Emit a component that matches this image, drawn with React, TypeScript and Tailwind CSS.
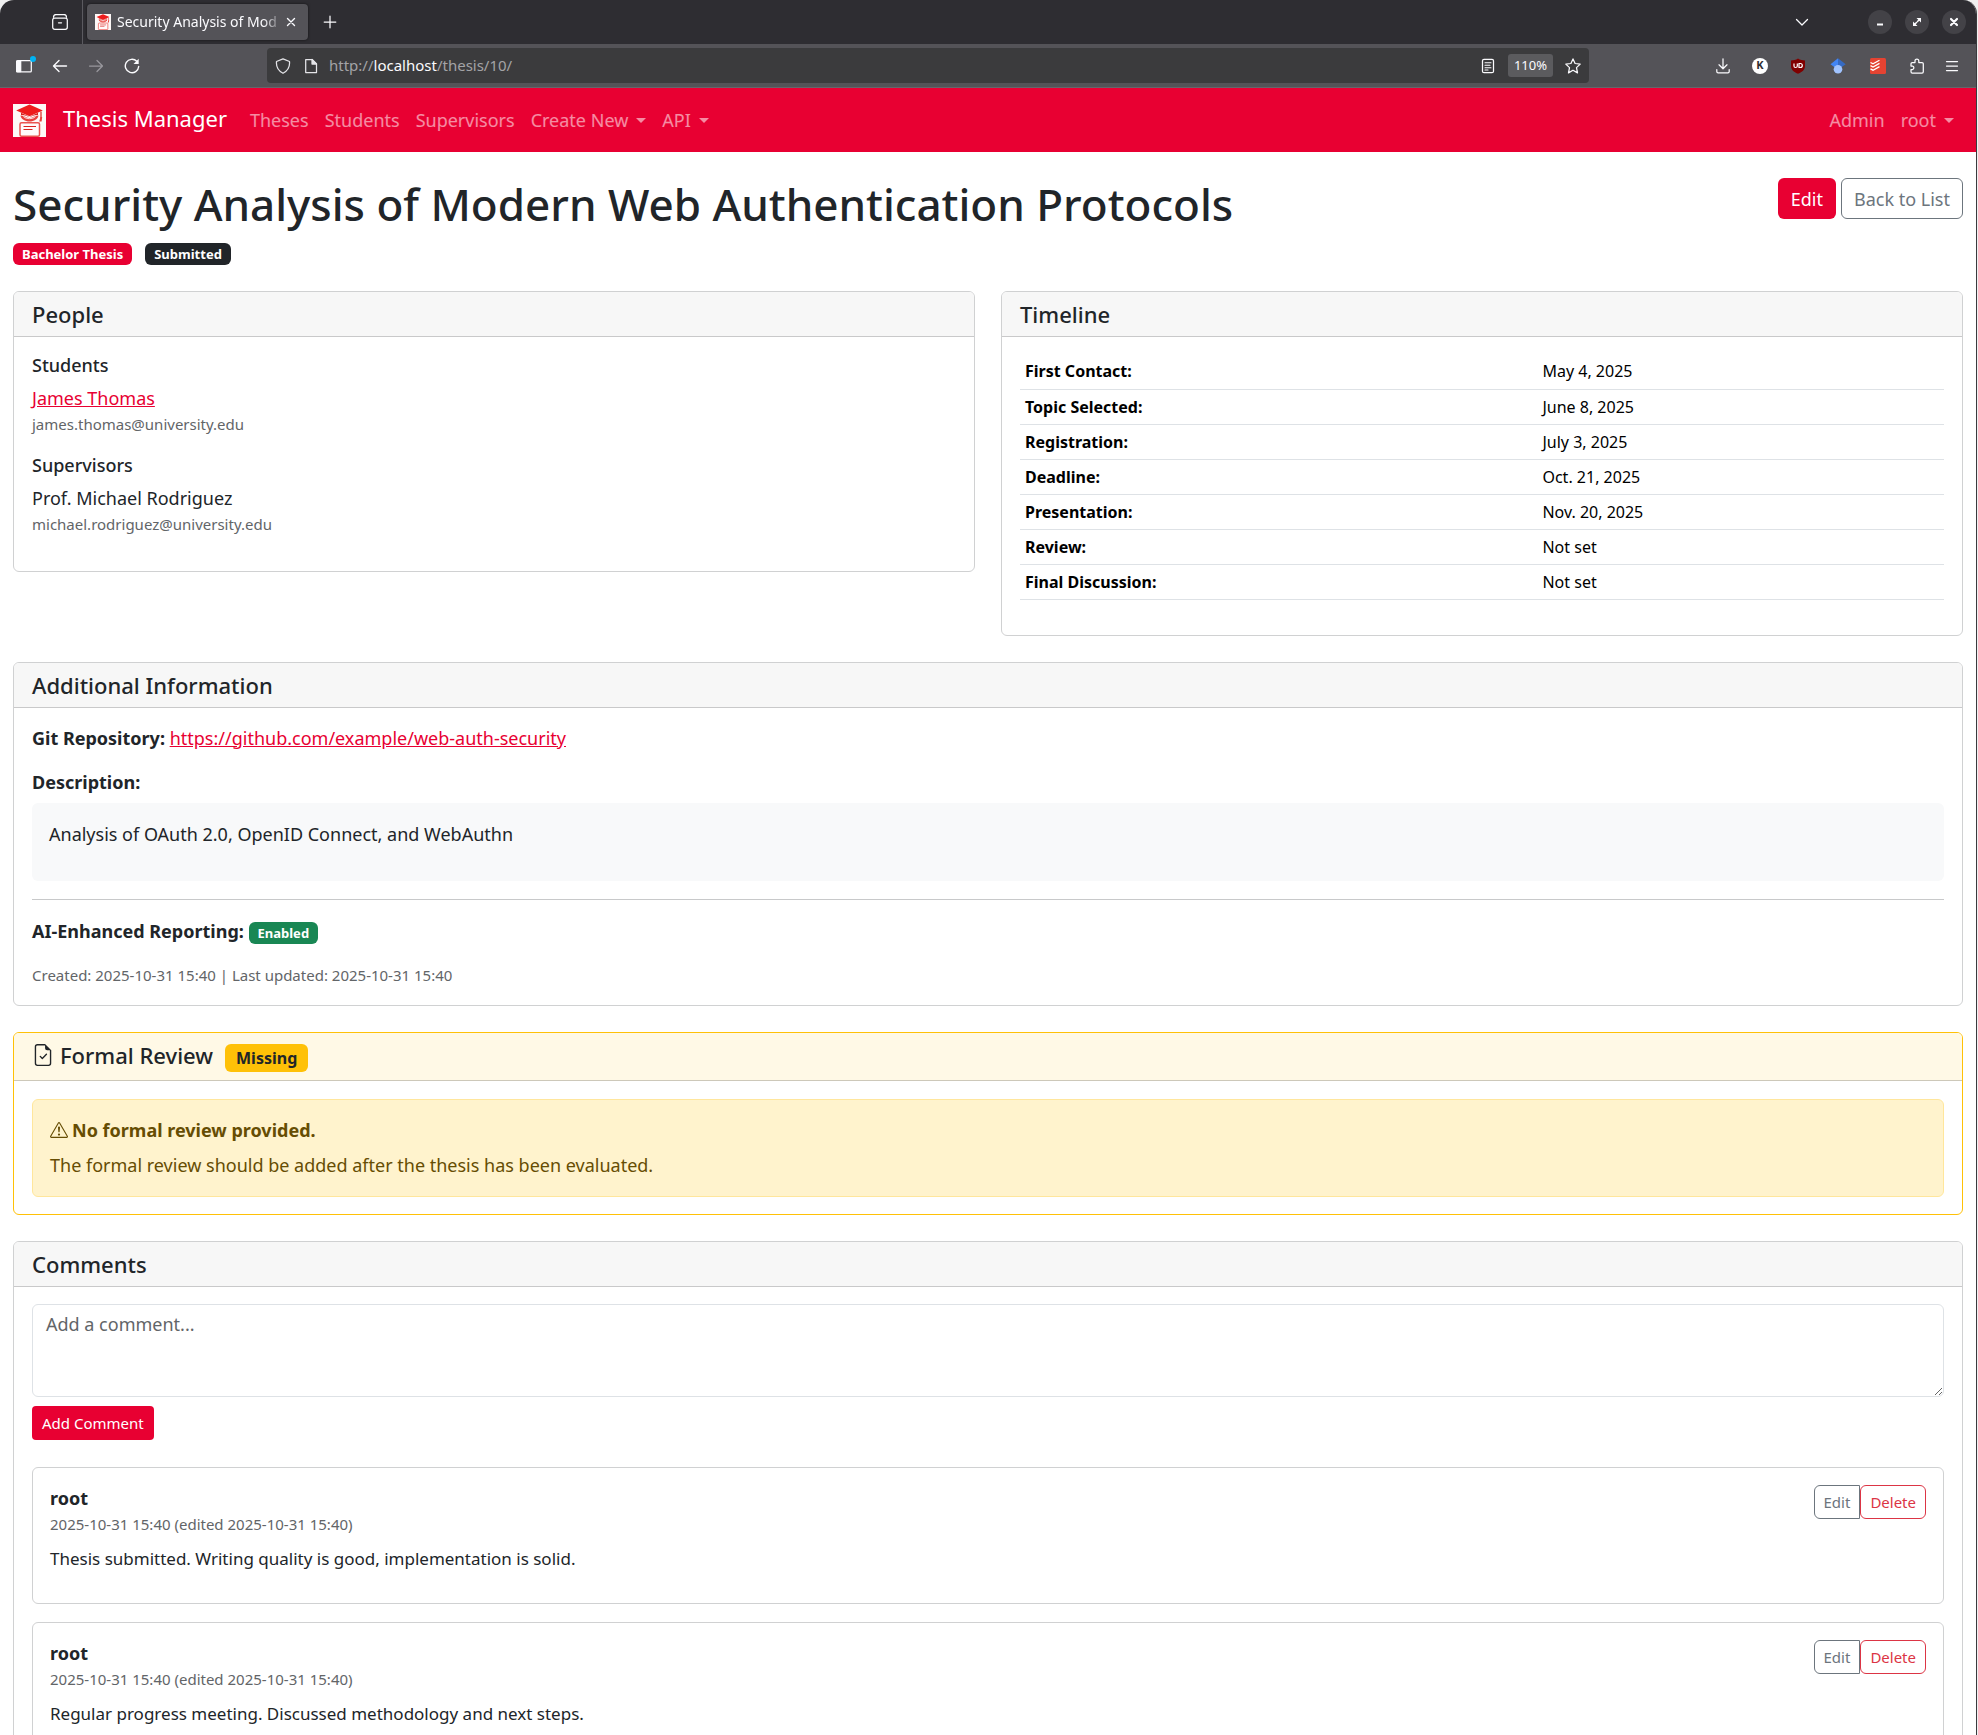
import type { ReactNode } from "react";
import { BsExclamationTriangle, BsFileEarmarkCheck } from "react-icons/bs";

function Logo({ className }: { className: string }) {
  return (
    <svg viewBox="0 0 33 33" className={className} aria-hidden="true">
      <rect width="33" height="33" fill="#fdf8f7" />
      <path d="M16.500 0.500 L29.800 6.400 L16.500 12.200 L3.200 6.400 Z" fill="#ee1c1c" />
      <path d="M8 8.800 L16.500 12.800 L25 8.800 V11 C21.500 10.500 19 12.600 16.500 12.800 C14 12.600 11.500 10.500 8 11 Z" fill="#d9231f" />
      <path d="M28 7.500 V14" stroke="#d9231f" strokeWidth="1.200" />
      <path d="M27.400 13 h1.800 l-0.600 4.500 h-2.400 z" fill="#e8413c" />
      <path d="M7.500 11.500 C10.500 11 13 14 16.500 14 C20 14 22.500 11 25.500 11.500 C25 15 21 17.500 16.500 17.500 C12 17.500 8 15 7.500 11.500 Z" fill="#e8413c" />
      <path d="M10.500 12.600 C13.500 15.400 19.500 15.400 22.500 12.600" stroke="#fdf8f7" strokeWidth="0.900" fill="none" />
      <rect x="7" y="18.700" width="19.500" height="13.500" rx="1.500" fill="#fffafa" stroke="#ea5550" strokeWidth="1.500" />
      <path d="M10.500 22.500 H23 M10.500 25.500 H19.500" stroke="#d9231f" strokeWidth="1.200" />
    </svg>
  );
}

function ChromeIcon({ children, className = "" }: { children: ReactNode; className?: string }) {
  return (
    <svg
      viewBox="0 0 16 16"
      className={`size-4 shrink-0 ${className}`}
      fill="none"
      stroke="currentColor"
      strokeWidth="1.25"
      strokeLinecap="round"
      strokeLinejoin="round"
      aria-hidden="true"
    >
      {children}
    </svg>
  );
}

function ToolButton({ label, children, className = "w-9" }: { label: string; children: ReactNode; className?: string }) {
  return (
    <button type="button" aria-label={label} className={`flex h-8 shrink-0 items-center justify-center ${className}`}>
      {children}
    </button>
  );
}

function TabBar() {
  return (
    <div className="flex h-11 items-center bg-[#2e2d32] text-[#fbfbfe]">
      <div className="flex h-11 w-[83px] shrink-0 items-center justify-end border-r border-[#5b5a60] pr-3.5">
        <button type="button" aria-label="Recent browsing" className="flex">
          <ChromeIcon>
            <path d="M1.500 3.300 C1.500 1.200 2.500 0.600 4 0.600 H12 C13.500 0.600 14.500 1.200 14.500 3.300" />
            <rect x="0.700" y="4" width="14.600" height="11.300" rx="2" />
            <path d="M6.500 8.800 h3" />
          </ChromeIcon>
        </button>
      </div>
      <div className="ml-1 flex h-9 w-[221px] shrink-0 items-center rounded-sm bg-[#545358] pl-2 shadow-[0_0_3px_rgba(0,0,0,0.6)]">
        <Logo className="size-4 shrink-0" />
        <span className="ml-1.5 w-[166px] text-sm whitespace-nowrap [mask-image:linear-gradient(to_right,black_88%,transparent)]">
          Security Analysis of Mod
        </span>
        <button type="button" aria-label="Close tab" className="flex">
          <ChromeIcon>
            <path d="M4.500 4.500 L11.500 11.500 M11.500 4.500 L4.500 11.500" strokeWidth="1.400" />
          </ChromeIcon>
        </button>
      </div>
      <ToolButton label="New tab" className="ml-1 w-9">
        <ChromeIcon>
          <path d="M8 2.200 V13.800 M2.200 8 H13.800" />
        </ChromeIcon>
      </ToolButton>
      <div className="grow" />
      <ToolButton label="List all tabs" className="mr-12 w-9">
        <ChromeIcon>
          <path d="M2.500 5.500 L8 11 L13.500 5.500" />
        </ChromeIcon>
      </ToolButton>
      <div className="flex gap-[13px] pr-2.5">
        <button type="button" aria-label="Minimize" className="flex size-6 items-center justify-center rounded-full bg-[#434247]">
          <ChromeIcon>
            <path d="M5 10.500 H11" strokeWidth="2" strokeLinecap="butt" />
          </ChromeIcon>
        </button>
        <button type="button" aria-label="Restore" className="flex size-6 items-center justify-center rounded-full bg-[#434247]">
          <ChromeIcon>
            <path d="M7.500 4 H12 V8.500 Z M4 7.500 V12 H8.500 Z" fill="currentColor" stroke="none" />
            <path d="M8.500 7.500 L11 5 M7.500 8.500 L5 11" strokeWidth="1.500" />
          </ChromeIcon>
        </button>
        <button type="button" aria-label="Close window" className="flex size-6 items-center justify-center rounded-full bg-[#434247]">
          <ChromeIcon>
            <path d="M5 5 L11 11 M11 5 L5 11" strokeWidth="2.200" />
          </ChromeIcon>
        </button>
      </div>
    </div>
  );
}

function ToolBar() {
  return (
    <div className="flex h-11 items-center border-b border-[#66656a] bg-[#545358] pl-1.5 text-[#fbfbfe]">
      <ToolButton label="Sidebar">
        <span className="relative flex">
          <ChromeIcon>
            <rect x="0.700" y="2.600" width="14.600" height="11.300" rx="1" />
            <path d="M0.700 3 h4 v10.600 h-4 z" fill="currentColor" />
          </ChromeIcon>
          <span className="absolute -top-0.5 -right-1 size-1.5 rounded-full bg-[#00b3f4]" />
        </span>
      </ToolButton>
      <ToolButton label="Back">
        <ChromeIcon>
          <path d="M14.500 8 H1.800 M7 2.500 L1.500 8 L7 13.500" strokeWidth="1.400" />
        </ChromeIcon>
      </ToolButton>
      <ToolButton label="Forward">
        <ChromeIcon className="text-[#98979c]">
          <path d="M1.500 8 H14.200 M9 2.500 L14.500 8 L9 13.500" />
        </ChromeIcon>
      </ToolButton>
      <ToolButton label="Reload">
        <ChromeIcon>
          <path d="M14.700 8.500 A6.700 6.700 0 1 1 12.800 3.300" strokeWidth="1.400" />
          <path d="M14.700 0.800 V6 H9.500 Z" fill="currentColor" stroke="none" />
        </ChromeIcon>
      </ToolButton>
      <div className="mr-[114px] ml-[117px] flex h-[35px] grow items-center rounded-sm bg-[#3b3b3d] px-2">
        <ChromeIcon className="text-[#e4e4e8]">
          <path d="M8 0.800 L14.500 3.500 C15 8.500 12.500 13 8 15.300 C3.500 13 1 8.500 1.500 3.500 Z" />
        </ChromeIcon>
        <ChromeIcon className="ml-3 text-[#e4e4e8]">
          <path d="M2.700 1.500 H9 L13.500 6 V14.600 H2.700 Z" />
          <path d="M9 1.500 V6 H13.500 Z" fill="currentColor" />
        </ChromeIcon>
        <div className="ml-2.5 grow text-[15px] whitespace-nowrap text-[#a3a3a6]">
          http://<span className="text-[#fbfbfe]">localhost</span>/thesis/10/
        </div>
        <ChromeIcon>
          <rect x="2.500" y="1.300" width="11" height="13.400" rx="1.500" />
          <path d="M5 4.800 H11 M5 7.300 H10 M5 9.800 H11 M5 12 H8" strokeWidth="1.100" />
        </ChromeIcon>
        <button type="button" className="ml-3 flex h-[23px] w-[45px] items-center justify-center rounded-[3px] bg-[#5b5b5e] text-[13px]">
          110%
        </button>
        <ChromeIcon className="ml-3">
          <path d="M8 0.900 L10.100 5.500 L15.200 6.100 L11.500 9.600 L12.500 14.900 L8 12.200 L3.500 14.900 L4.500 9.600 L0.800 6.100 L5.900 5.500 Z" />
        </ChromeIcon>
      </div>
      <div className="flex items-center pr-[7px]">
        <ToolButton label="Downloads" className="w-10">
          <ChromeIcon>
            <path d="M8 0.800 V10.500 M4 6.800 L8 10.800 L12 6.800 M1.800 11.500 V13.500 Q1.800 14.800 3.100 14.800 H12.900 Q14.200 14.800 14.200 13.500 V11.500" />
          </ChromeIcon>
        </ToolButton>
        <ToolButton label="Account" className="w-[34px]">
          <span className="flex size-4 items-center justify-center rounded-full bg-white text-[11px] font-bold text-[#2e2d32]">K</span>
        </ToolButton>
        <ToolButton label="uBlock Origin" className="w-[42px]">
          <svg viewBox="0 0 16 16" className="size-4" aria-hidden="true">
            <path d="M8 0.500 C10 2 13 2.400 15 2.400 V8 C15 12 11.500 14.500 8 15.700 C4.500 14.500 1 12 1 8 V2.400 C3 2.400 6 2 8 0.500 Z" fill="#800000" />
            <path
              d="M4 5.500 V8 Q4 9.500 5.500 9.500 Q7.300 9.500 7.300 8 V5.500 M9 5.500 H10.300 Q12.300 5.500 12.300 7.500 Q12.300 9.500 10.300 9.500 H9 Z"
              fill="none"
              stroke="#fff"
              strokeWidth="1.200"
            />
          </svg>
        </ToolButton>
        <ToolButton label="Scholar" className="w-[38px]">
          <svg viewBox="0 0 16 16" className="size-4" aria-hidden="true">
            <path d="M8 0.200 L0.500 6.200 L4.200 9 H8 Z" fill="#4285f4" />
            <path d="M8 0.200 L15.700 6.200 L11.800 9 H8 Z" fill="#356ac3" />
            <circle cx="8" cy="11.200" r="4.300" fill="#a0c3ff" />
          </svg>
        </ToolButton>
        <ToolButton label="Todoist" className="w-[42px]">
          <svg viewBox="0 0 16 16" className="size-4" aria-hidden="true">
            <rect width="16" height="16" rx="1.500" fill="#e44332" />
            <path
              d="M0.500 4.500 L3 5.800 L9.500 2.200 M0.500 7.700 L3 9 L9.500 5.400 M0.500 10.900 L3 12.200 L9.500 8.600"
              fill="none"
              stroke="#fff"
              strokeWidth="1.300"
            />
          </svg>
        </ToolButton>
        <ToolButton label="Extensions">
          <ChromeIcon>
            <path d="M6 4.500 V3 A1.900 1.900 0 0 1 9.800 3 V4.500 H13 Q14.300 4.500 14.300 5.800 V13.800 Q14.300 15.100 13 15.100 H3.300 Q2 15.100 2 13.800 V11.500 H3.500 A1.800 1.800 0 0 0 3.500 8 H2 V5.800 Q2 4.500 3.300 4.500 Z" />
          </ChromeIcon>
        </ToolButton>
        <ToolButton label="Menu" className="w-[34px]">
          <ChromeIcon>
            <path d="M2.500 3.500 H13.500 M2.500 8 H13.500 M2.500 12.500 H13.500" />
          </ChromeIcon>
        </ToolButton>
      </div>
    </div>
  );
}

function Caret() {
  return <span className="mb-1 ml-2 inline-block border-x-[5px] border-t-[5px] border-x-transparent border-t-current align-middle" />;
}

function NavLink({ children }: { children: ReactNode }) {
  return (
    <a href="#" className="px-2 whitespace-nowrap">
      {children}
    </a>
  );
}

function NavMenu({ children }: { children: ReactNode }) {
  return (
    <button type="button" className="px-2 whitespace-nowrap">
      {children}
      <Caret />
    </button>
  );
}

function NavBar() {
  return (
    <nav className="flex h-16 items-center bg-[#e80032] pr-3.5 pl-[13px] text-white">
      <Logo className="size-[33px] shrink-0" />
      <a href="#" className="mr-[15px] ml-[17px] pb-1 text-[22px] whitespace-nowrap">
        Thesis Manager
      </a>
      <div className="flex grow items-center text-white/55">
        <NavLink>Theses</NavLink>
        <NavLink>Students</NavLink>
        <NavLink>Supervisors</NavLink>
        <NavMenu>Create New</NavMenu>
        <NavMenu>API</NavMenu>
      </div>
      <div className="flex items-center text-white/55">
        <NavLink>Admin</NavLink>
        <NavMenu>root</NavMenu>
      </div>
    </nav>
  );
}

function Card({ title, children }: { title: string; children: ReactNode }) {
  return (
    <section className="overflow-hidden rounded-md border border-[#d0d1d2] bg-white">
      <h2 className="border-b border-[#c9c9ca] bg-[#f7f7f7] px-[18px] py-[9px] text-[22px] leading-[26px] font-medium">{title}</h2>
      <div className="px-[18px] py-[17px]">{children}</div>
    </section>
  );
}

function Badge({ className, children }: { className: string; children: ReactNode }) {
  return <span className={`inline-block rounded-md px-[9px] text-[13px] leading-[22px] font-bold text-white ${className}`}>{children}</span>;
}

function Person({ role, name, email }: { role: string; name: ReactNode; email: string }) {
  return (
    <>
      <h3 className="mb-[9px] leading-[22px] font-medium">{role}</h3>
      <div className="mb-[17px]">
        {name}
        <div className="text-[15px] text-[#626568]">{email}</div>
      </div>
    </>
  );
}

function People() {
  return (
    <Card title="People">
      <Person
        role="Students"
        name={
          <a href="#" className="text-[#e80032] underline">
            James Thomas
          </a>
        }
        email="james.thomas@university.edu"
      />
      <Person role="Supervisors" name={<div>Prof. Michael Rodriguez</div>} email="michael.rodriguez@university.edu" />
    </Card>
  );
}

const timeline = [
  ["First Contact:", "May 4, 2025"],
  ["Topic Selected:", "June 8, 2025"],
  ["Registration:", "July 3, 2025"],
  ["Deadline:", "Oct. 21, 2025"],
  ["Presentation:", "Nov. 20, 2025"],
  ["Review:", "Not set"],
  ["Final Discussion:", "Not set"],
];

function Timeline() {
  return (
    <Card title="Timeline">
      <table className="mb-[18px] w-full border-collapse text-left text-base text-black">
        <tbody>
          {timeline.map(([label, value]) => (
            <tr key={label} className="h-[35px] border-b border-[#dee2e6]">
              <th scope="row" className="w-[56%] px-[5px] font-bold">
                {label}
              </th>
              <td className="px-[5px]">{value}</td>
            </tr>
          ))}
        </tbody>
      </table>
    </Card>
  );
}

function AdditionalInformation() {
  return (
    <Card title="Additional Information">
      <p className="mb-[18px]">
        <strong>Git Repository:</strong>{" "}
        <a href="#" className="text-[#e80032] underline">
          https://github.com/example/web-auth-security
        </a>
      </p>
      <p className="mb-2">
        <strong>Description:</strong>
      </p>
      <div className="rounded-md bg-[#f8f9fa] px-[17px] pt-[18px] pb-[34px]">Analysis of OAuth 2.0, OpenID Connect, and WebAuthn</div>
      <hr className="my-[18px] border-[#c8c9ca]" />
      <p className="mb-[18px]">
        <strong>AI-Enhanced Reporting:</strong> <Badge className="bg-[#198754]">Enabled</Badge>
      </p>
      <p className="text-[15px] text-[#626568]">Created: 2025-10-31 15:40 | Last updated: 2025-10-31 15:40</p>
    </Card>
  );
}

function FormalReview() {
  return (
    <section className="overflow-hidden rounded-md border border-[#ffc107] bg-white">
      <h2 className="border-b border-[#cdc8b9] bg-[#fff9e6] px-[18px] pt-[9px] pb-2 text-[22px] leading-[26px] font-medium">
        <BsFileEarmarkCheck className="mr-1.5 inline-block size-[22px] align-[-2px]" aria-hidden="true" />
        Formal Review
        <span className="ml-3 inline-block rounded-md bg-[#ffc107] px-[11px] text-base leading-7 font-bold text-[#212529]">Missing</span>
      </h2>
      <div className="px-[18px] pt-[18px] pb-[17px]">
        <div className="rounded-md border border-[#ffe69c] bg-[#fff3cd] px-[17px] pt-[17px] pb-[18px] text-[#664d03]">
          <p className="mb-[9px] flex items-center">
            <BsExclamationTriangle className="mr-1 size-[18px]" aria-hidden="true" />
            <strong>No formal review provided.</strong>
          </p>
          <p>The formal review should be added after the thesis has been evaluated.</p>
        </div>
      </div>
    </section>
  );
}

function Comment({ text }: { text: string }) {
  return (
    <article className="mt-[18px] rounded-md border border-[#d0d1d2] px-[17px] pt-[17px] pb-[32px]">
      <header className="mb-[9px] flex items-start justify-between">
        <div>
          <strong>root</strong>
          <div className="text-[15px] text-[#626568]">2025-10-31 15:40 (edited 2025-10-31 15:40)</div>
        </div>
        <div className="flex text-[15px] leading-6">
          <button type="button" className="rounded-l-md border border-[#6c757d] px-[9px] py-1 text-[#6c757d]">
            Edit
          </button>
          <button type="button" className="rounded-md border border-[#dc3545] px-[9px] py-1 text-[#dc3545]">
            Delete
          </button>
        </div>
      </header>
      <p className="text-[17px] leading-[25px]">{text}</p>
    </article>
  );
}

function Comments() {
  return (
    <Card title="Comments">
      <form className="pb-[9px]">
        <textarea
          aria-label="Add a comment"
          placeholder="Add a comment..."
          rows={3}
          className="block h-[93px] w-full rounded-md border border-[#dee2e6] px-[13px] py-[6px] placeholder:text-[#626568]"
        />
        <button type="button" className="mt-[9px] block h-[34px] rounded bg-[#e80032] px-2.5 text-[15px] text-white">
          Add Comment
        </button>
      </form>
      <Comment text="Thesis submitted. Writing quality is good, implementation is solid." />
      <Comment text="Regular progress meeting. Discussed methodology and next steps." />
    </Card>
  );
}

export default function App() {
  return (
    <div className="h-screen bg-[#f0f0f0] pr-px font-['Noto_Sans',sans-serif]">
      <div className="flex h-full flex-col overflow-hidden rounded-t-[14px] border-r border-[#3a3a3d] bg-white">
        <div className="shrink-0">
          <TabBar />
          <ToolBar />
        </div>
        <div className="grow overflow-hidden text-[18px] leading-[26px] text-[#212529]">
          <NavBar />
          <main className="flex flex-col gap-[26px] px-[13px] pt-[26px]">
            <header className="flex items-start justify-between">
              <div>
                <h1 className="mb-3 text-[44px] leading-[53px] font-medium">Security Analysis of Modern Web Authentication Protocols</h1>
                <div className="flex gap-[13px]">
                  <Badge className="bg-[#e80032]">Bachelor Thesis</Badge>
                  <Badge className="bg-[#212529]">Submitted</Badge>
                </div>
              </div>
              <div className="flex gap-[5px]">
                <button type="button" className="h-[41px] rounded-md bg-[#e80032] px-[13px] text-white">
                  Edit
                </button>
                <button type="button" className="h-[41px] rounded-md border border-[#6c757d] px-3 text-[#6c757d]">
                  Back to List
                </button>
              </div>
            </header>
            <div className="grid grid-cols-2 items-start gap-[26px]">
              <People />
              <Timeline />
            </div>
            <AdditionalInformation />
            <FormalReview />
            <Comments />
          </main>
        </div>
      </div>
    </div>
  );
}
